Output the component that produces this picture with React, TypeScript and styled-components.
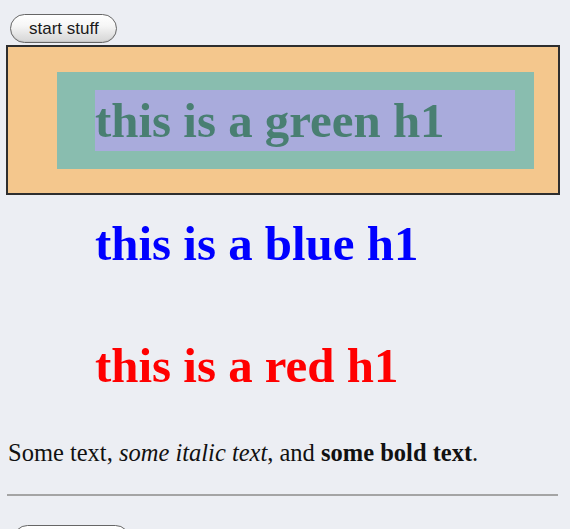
import React from "react";
import styled, { createGlobalStyle } from "styled-components";

const GlobalStyle = createGlobalStyle`
  html, body {
    margin: 0;
    padding: 0;
    background: #ECEEF3;
  }
`;

const Page = styled.div`
  display: flex;
  flex-direction: column;
  align-items: flex-start;
  padding: 0 10px 0 6px;
  font-family: "Liberation Serif", "Times New Roman", serif;
`;

const PillButton = styled.button<{ $ml: number; $mt: number; $w?: number }>`
  box-sizing: border-box;
  margin: ${(p) => p.$mt}px 0 0 ${(p) => p.$ml}px;
  height: 29px;
  width: ${(p) => (p.$w ? `${p.$w}px` : "auto")};
  padding: 0 17px 0 18px;
  border: 1px solid #666;
  border-radius: 15px;
  background: linear-gradient(#ffffff 0%, #f6f6f6 40%, #e2e2e2 75%, #d6d6d6 100%);
  box-shadow: inset 0 -1px 1px rgba(0, 0, 0, 0.08);
  font-family: "Liberation Sans", Arial, sans-serif;
  font-size: 17px;
  color: #1a1a1a;
  line-height: 27px;
`;

const MarginBox = styled.div`
  align-self: stretch;
  margin-top: 2px;
  border: 2px solid #2e2e2e;
  background: #F4C78D;
  padding: 25px 24px 24px 49px;
`;

const PaddingBox = styled.div`
  background: #89BDAF;
  padding: 18px 19px 18px 38px;
`;

const Heading = styled.h1<{ $color: string; $bg?: string; $mt?: number; $ml?: number }>`
  margin: ${(p) => p.$mt ?? 0}px 0 0 ${(p) => p.$ml ?? 0}px;
  padding: 0;
  height: 61px;
  line-height: 61px;
  font-family: "Liberation Serif", "Times New Roman", serif;
  font-weight: bold;
  font-size: 48.9px;
  white-space: nowrap;
  color: ${(p) => p.$color};
  background: ${(p) => p.$bg ?? "transparent"};
`;

const Paragraph = styled.p`
  margin: 42px 0 0 2px;
  font-size: 24.5px;
  line-height: 30px;
  color: #111;
  white-space: nowrap;
`;

const Rule = styled.hr`
  align-self: stretch;
  margin: 26px 2px 0 1px;
  border: none;
  border-top: 2px solid #a4a4a4;
  height: 0;
`;

export default function App() {
  return (
    <>
      <GlobalStyle />
      <Page>
        <PillButton $ml={4} $mt={14}>start stuff</PillButton>
        <MarginBox>
          <PaddingBox>
            <Heading $color="#497F72" $bg="#A9ABDC">this is a green h1</Heading>
          </PaddingBox>
        </MarginBox>
        <Heading $color="#0000FF" $mt={18} $ml={89}>this is a blue h1</Heading>
        <Heading $color="#FF0000" $mt={61} $ml={89}>this is a red h1</Heading>
        <Paragraph>
          Some text, <em>some italic text</em>, and <strong>some bold text</strong>.
        </Paragraph>
        <Rule />
        <PillButton $ml={7} $mt={29} $w={117} aria-label="second button" />
      </Page>
    </>
  );
}
